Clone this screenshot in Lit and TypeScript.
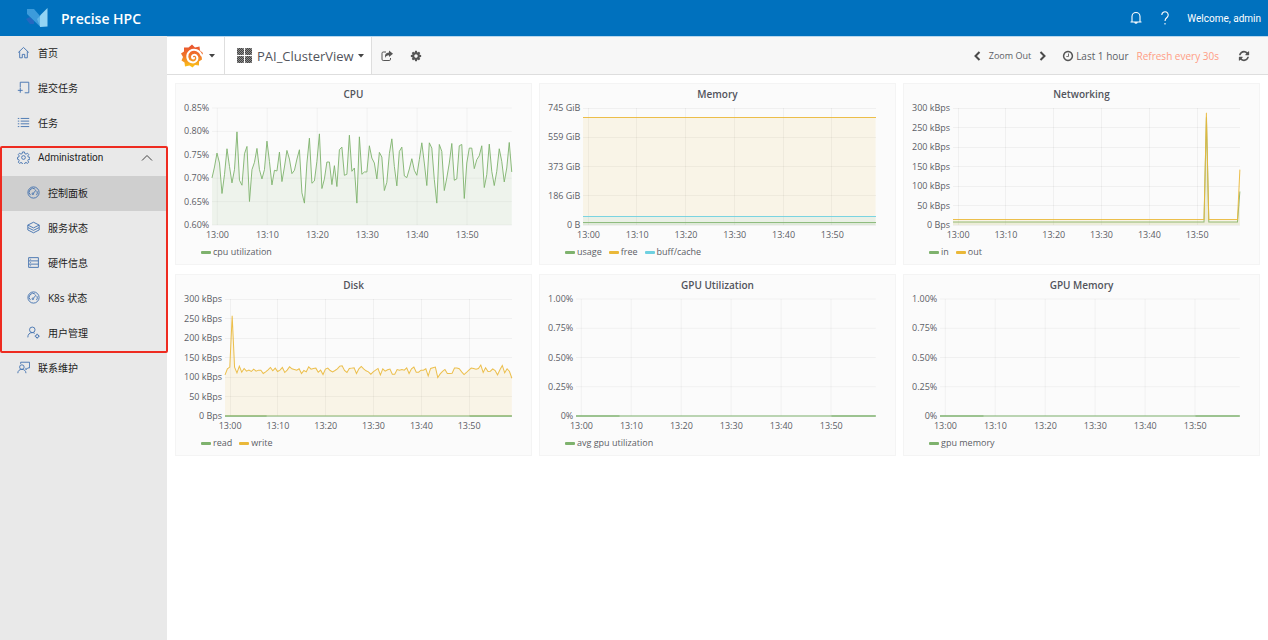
import { LitElement, html, svg, css, nothing } from "lit";
import { customElement, property, state } from "lit/decorators.js";
import { classMap } from "lit/directives/class-map.js";

const GREEN = "#7eb26d";
const YELLOW = "#eab839";
const BLUE = "#6ed0e0";

interface Series {
  name: string;
  color: string;
  min: number;
  max: number;
  /** One sample every 30 seconds; a single entry means a constant series. */
  values: number[];
  faint?: boolean;
}

interface PanelData {
  title: string;
  ticks: string[];
  series: Series[];
}

const CPU = [
  295, 262, 220, 250, 342, 285, 207, 260, 310, 270, 156, 302, 317, 222, 200, 366, 270, 248, 206, 270, 298, 270, 184, 245,
  316, 272, 274, 217, 306, 262, 212, 238, 282, 272, 238, 210, 340, 371, 250, 175, 311, 304, 245, 162, 327, 298, 247, 247,
  315, 258, 321, 210, 202, 287, 284, 166, 275, 265, 371, 171, 284, 277, 277, 198, 235, 250, 298, 218, 232, 333, 308, 222,
  177, 260, 319, 215, 202, 289, 294, 268, 237, 272, 287, 240, 189, 250, 318, 189, 205, 300, 371, 194, 215, 333, 295, 250,
  191, 302, 298, 198, 194, 357, 250, 205, 205, 267, 240, 228, 198, 324, 285, 193, 275, 318, 275, 207, 245, 307, 265, 188,
  277,
];

const DISK = [
  315, 297, 292, 140, 292, 309, 289, 307, 296, 304, 301, 305, 298, 304, 301, 301, 311, 306, 300, 293, 303, 295, 305, 301,
  293, 308, 301, 291, 297, 299, 301, 297, 311, 302, 306, 291, 298, 296, 295, 307, 301, 314, 298, 295, 302, 306, 302, 297,
  289, 288, 302, 308, 296, 295, 294, 311, 297, 290, 297, 303, 306, 313, 306, 301, 296, 315, 297, 304, 300, 298, 313, 313,
  299, 301, 299, 301, 294, 311, 297, 292, 307, 307, 301, 301, 297, 318, 296, 294, 292, 323, 312, 305, 299, 311, 311, 310,
  295, 295, 297, 306, 314, 308, 301, 295, 296, 298, 296, 286, 308, 294, 305, 304, 297, 302, 315, 300, 287, 309, 297, 305,
  325,
];

const traffic = (base: number, peak: number, last: number) =>
  Array.from({ length: 121 }, (_, i) => (i === 106 ? peak : i === 120 ? last : base));

const RATE = ["300 kBps", "250 kBps", "200 kBps", "150 kBps", "100 kBps", "50 kBps", "0 Bps"];
const PERCENT = ["1.00%", "0.75%", "0.50%", "0.25%", "0%"];
const TIMES = ["13:00", "13:10", "13:20", "13:30", "13:40", "13:50"];

const PANELS: PanelData[] = [
  {
    title: "CPU",
    ticks: ["0.85%", "0.80%", "0.75%", "0.70%", "0.65%", "0.60%"],
    series: [{ name: "cpu utilization", color: GREEN, min: 437, max: 84, values: CPU }],
  },
  {
    title: "Memory",
    ticks: ["745 GiB", "559 GiB", "373 GiB", "186 GiB", "0 B"],
    series: [
      { name: "usage", color: GREEN, min: 0, max: 745, values: [13] },
      { name: "free", color: YELLOW, min: 0, max: 745, values: [686] },
      { name: "buff/cache", color: BLUE, min: 0, max: 745, values: [53] },
    ],
  },
  {
    title: "Networking",
    ticks: RATE,
    series: [
      { name: "in", color: GREEN, min: 0, max: 300, values: traffic(8, 276, 86) },
      { name: "out", color: YELLOW, min: 0, max: 300, values: traffic(14, 288, 142) },
    ],
  },
  {
    title: "Disk",
    ticks: RATE,
    series: [
      { name: "read", color: GREEN, min: 0, max: 300, values: [0], faint: true },
      { name: "write", color: YELLOW, min: 437, max: 90, values: DISK },
    ],
  },
  {
    title: "GPU Utilization",
    ticks: PERCENT,
    series: [{ name: "avg gpu utilization", color: GREEN, min: 0, max: 1, values: [0], faint: true }],
  },
  {
    title: "GPU Memory",
    ticks: PERCENT,
    series: [{ name: "gpu memory", color: GREEN, min: 0, max: 1, values: [0], faint: true }],
  },
];

@customElement("graph-panel")
class GraphPanel extends LitElement {
  @property({ attribute: false }) panel!: PanelData;

  static styles = css`
    :host {
      display: block;
      box-sizing: border-box;
      min-width: 0;
      padding: 0 19px 5px 8px;
      border: 1px solid #f4f4f4;
      background: #fbfbfb;
      color: #5c5e66;
      font-size: 9px;
      line-height: 12px;
    }
    .title {
      margin: 0 -11px 4px 0;
      color: #52545c;
      font-size: 10px;
      font-weight: 600;
      line-height: 20px;
      text-align: center;
    }
    .chart {
      display: grid;
      grid-template-columns: auto minmax(0, 1fr);
      column-gap: 3px;
    }
    .ticks {
      display: flex;
      flex-direction: column;
      justify-content: space-between;
      margin: -6px 0;
      text-align: right;
      white-space: nowrap;
    }
    .plot {
      display: block;
      width: 100%;
      height: 117px;
      overflow: visible;
    }
    .plot * {
      vector-effect: non-scaling-stroke;
    }
    .rule {
      stroke: #000;
      stroke-opacity: 0.045;
      shape-rendering: crispEdges;
    }
    .line {
      fill: none;
      stroke-width: 1;
      stroke-opacity: 0.9;
    }
    .flat {
      shape-rendering: crispEdges;
    }
    .base {
      stroke-width: 2;
      stroke-opacity: 0.5;
    }
    .times {
      grid-column: 2;
      display: flex;
      margin: 0 6.6% 0 -6.6%;
      line-height: 20px;
      text-align: center;
    }
    .time {
      flex: 1 1 0;
    }
    .legend {
      display: flex;
      gap: 7px;
      margin: 0;
      padding: 0 0 0 17px;
      list-style: none;
      line-height: 14px;
    }
    .key {
      display: flex;
      align-items: center;
      gap: 2px;
    }
    .swatch {
      width: 10px;
      height: 3px;
      border-radius: 1px;
    }
  `;

  private drawSeries(s: Series) {
    const y = (v: number) => ((s.max - v) / (s.max - s.min)) * 1000;
    const values = s.values.length === 1 ? [s.values[0], s.values[0]] : s.values;
    const step = 1200 / (values.length - 1);
    const points = values.map((v, i) => `${(i * step).toFixed(1)},${y(v).toFixed(1)}`).join(" ");
    if (s.faint) {
      return svg`
        <path class="line base" stroke=${s.color} d="M0 1000H1200"></path>
        <path class="line base" stroke=${s.color} d="M0 1000H174M1023 1000H1200"></path>`;
    }
    return svg`
      <polygon points="0,1000 ${points} 1200,1000" fill=${s.color} fill-opacity="0.1"></polygon>
      <polyline class=${s.values.length === 1 ? "line flat" : "line"} points=${points} stroke=${s.color}></polyline>`;
  }

  render() {
    const { title, ticks, series } = this.panel;
    return html`
      <h2 class="title">${title}</h2>
      <div class="chart">
        <div class="ticks">${ticks.map((t) => html`<span>${t}</span>`)}</div>
        <svg class="plot" viewBox="0 0 1200 1000" preserveAspectRatio="none" role="img" aria-label=${title}>
          ${ticks.map((_, i) => {
            const y = (i / (ticks.length - 1)) * 1000;
            return svg`<line class="rule" x1="0" x2="1200" y1=${y} y2=${y}></line>`;
          })}
          ${TIMES.map((_, i) => svg`<line class="rule" x1=${21 + i * 200} x2=${21 + i * 200} y1="0" y2="1000"></line>`)}
          ${series.map((s) => this.drawSeries(s))}
        </svg>
        <div class="times">${TIMES.map((t) => html`<span class="time">${t}</span>`)}</div>
      </div>
      <ul class="legend">
        ${series.map(
          (s) => html`<li class="key"><span class="swatch" style="background:${s.color}"></span>${s.name}</li>`
        )}
      </ul>
    `;
  }
}

const ICONS: Record<string, unknown> = {
  home: svg`<path d="M1.500 8L8 1.800L14.500 8M3.300 6.500v8h3.200v-4.200h3v4.200h3.200v-8"/>`,
  submit: svg`<path d="M4 8V1.500h10.500v10.500M9.500 14.500h5v-2.500M4 8.500v6M1 11.500h6"/>`,
  list: svg`<path d="M4.500 3H15M4.500 6.300H15M4.500 9.600H15M4.500 13H15M1 3h1.800M1 6.300h1.800M1 9.600h1.800M1 13h1.800"/>`,
  gear: svg`<circle cx="8" cy="8" r="2.300"/><path d="M6.800 1.200h2.400l.4 2 1.500.7 1.800-1.200 1.500 1.600-1.100 1.700.6 1.500 2 .4v2.200l-2 .4-.6 1.500 1.100 1.700-1.500 1.600-1.800-1.200-1.500.7-.4 2H6.800l-.4-2-1.500-.7-1.800 1.200-1.500-1.600 1.100-1.700-.6-1.500-1.500-.4V7.900l1.500-.4.6-1.500-1.100-1.700 1.500-1.600 1.800 1.200 1.500-.7z"/>`,
  gauge: svg`<circle cx="8" cy="8" r="6.900"/><path d="M4.300 11.200A4.600 4.600 0 0 1 10.300 4M12.200 6.200A4.600 4.600 0 0 1 11.700 11.200M7.800 9L11.300 4.900"/><circle cx="7.200" cy="9.600" r="1"/>`,
  layers: svg`<path d="M8 1.500L15 5 8 8.500 1 5zM1 5v3l7 3.500L15 8V5M1 8v3l7 3.500 7-3.500V8"/>`,
  server: svg`<path d="M2 2h12v12H2zM2 6h12M2 10h12M4 4h1M4 8h1M4 12h1"/>`,
  user: svg`<circle cx="6.500" cy="4.700" r="3.400"/><path d="M1 14c0-3.500 2-5.900 5.500-5.900 1.300 0 2.300.4 3 1"/><circle cx="12.500" cy="12.500" r="1.900"/><path d="M12.500 9.500v1M12.500 14.500v1M9.500 12.500h1M14.500 12.500h1"/>`,
  contact: svg`<circle cx="6" cy="7.500" r="2.800"/><path d="M1 15c0-2.900 2-4.700 5-4.700s5 1.800 5 4.700M4.500 3.500v-2h11v7h-2.200l-2.300 2.300V8.500"/>`,
};

const FA_COG =
  "M1152 896q0-106-75-181t-181-75-181 75-75 181 75 181 181 75 181-75 75-181zm512-109v222q0 12-8 23t-20 13l-185 28q-19 54-39 91 35 50 107 138 10 12 10 25t-9 23q-27 37-99 108t-94 71q-12 0-26-9l-138-108q-44 23-91 38-16 136-29 186-7 28-36 28h-222q-14 0-24.500-8.500t-11.500-21.500l-28-184q-49-16-90-37l-141 107q-10 9-25 9-14 0-25-11-126-114-165-168-7-10-7-23 0-12 8-23 15-21 51-66.500t54-70.500q-27-50-41-99l-183-27q-13-2-21-12.500t-8-23.500v-222q0-12 8-23t19-13l186-28q14-46 39-92-40-57-107-138-10-12-10-24 0-10 9-23 26-36 98.500-107.500t94.500-71.500q13 0 26 10l138 107q44-23 91-38 16-136 29-186 7-28 36-28h222q14 0 24.500 8.500t11.500 21.500l28 184q49 16 90 37l142-107q9-9 24-9 13 0 25 10 129 119 165 170 7 8 7 22 0 12-8 23-15 21-51 66.500t-54 70.500q26 50 41 98l183 28q13 2 21 12.500t8 23.500z";
const FA_REFRESH =
  "M1639 1056q0 5-1 7-64 268-268 434.500t-478 166.500q-146 0-282.500-55t-243.500-157l-129 129q-19 19-45 19t-45-19-19-45v-448q0-26 19-45t45-19h448q26 0 45 19t19 45-19 45l-137 137q71 66 161 102t187 36q134 0 250-65t186-179q11-17 53-117 8-23 30-23h192q13 0 22.500 9.500t9.500 22.500zm25-800v448q0 26-19 45t-45 19h-448q-26 0-45-19t-19-45 19-45l138-138q-148-137-349-137-134 0-250 65t-186 179q-11 17-53 117-8 23-30 23h-199q-13 0-22.500-9.500t-9.500-22.500v-7q65-268 270-434.500t480-166.500q146 0 284 55.500t245 156.500l130-129q19-19 45-19t45 19 19 45z";
const FA_CLOCK =
  "M1024 544v448q0 14-9 23t-23 9h-320q-14 0-23-9t-9-23v-64q0-14 9-23t23-9h224v-352q0-14 9-23t23-9h64q14 0 23 9t9 23zm416 352q0-148-73-273t-198-198-273-73-273 73-198 198-73 273 73 273 198 198 273 73 273-73 198-198 73-273zm224 0q0 209-103 385.500t-279.500 279.500-385.500 103-385.500-103-279.500-279.500-103-385.500 103-385.500 279.500-279.500 385.500-103 385.500 103 279.500 279.500 103 385.500z";

const fa = (d: string) => html`<svg class="fa" viewBox="0 0 1792 1792" aria-hidden="true"><path d=${d}></path></svg>`;

const SUB_ITEMS = [
  { icon: "gauge", label: "控制面板" },
  { icon: "layers", label: "服务状态" },
  { icon: "server", label: "硬件信息" },
  { icon: "gauge", label: "K8s 状态" },
  { icon: "user", label: "用户管理" },
];

@customElement("side-nav")
class SideNav extends LitElement {
  @state() private open = true;
  @state() private current = "控制面板";

  static styles = css`
    :host {
      display: block;
      background: #e9e9e9;
      color: #1c1c1c;
      font-size: 10px;
    }
    .item {
      display: flex;
      align-items: center;
      gap: 8px;
      box-sizing: border-box;
      width: 100%;
      height: 35px;
      padding: 0 14px 2px 17px;
      border: 0;
      background: none;
      color: inherit;
      font: inherit;
      text-align: left;
      text-decoration: none;
      cursor: pointer;
    }
    .sub {
      padding-left: 27px;
    }
    .active {
      padding-left: 25px;
      border-left: 2px solid #8c2b45;
      background: #cfcfcf;
    }
    .parent {
      font-family: Roboto, sans-serif;
    }
    .icon {
      flex: none;
      width: 13px;
      height: 13px;
      fill: none;
      stroke: #3f6fae;
      stroke-width: 1.1;
    }
    .label {
      flex: 1;
    }
    .caret {
      width: 12px;
      height: 12px;
      fill: none;
      stroke: #444;
    }
    .group {
      position: relative;
    }
    .marker {
      position: absolute;
      inset: 5px -1px -2px 0;
      border: 2px solid #ee2b20;
      border-radius: 2px;
      pointer-events: none;
    }
  `;

  private icon(name: string) {
    return html`<svg class="icon" viewBox="0 0 16 16" aria-hidden="true">${ICONS[name]}</svg>`;
  }

  private link(icon: string, label: string, sub = false) {
    const active = this.current === label;
    return html`<a
      class=${classMap({ item: true, sub, active })}
      href="#"
      aria-current=${active ? "page" : nothing}
      @click=${(e: Event) => {
        e.preventDefault();
        this.current = label;
      }}
      >${this.icon(icon)}<span class="label">${label}</span></a
    >`;
  }

  render() {
    return html`<nav>
      ${this.link("home", "首页")} ${this.link("submit", "提交任务")} ${this.link("list", "任务")}
      <div class="group">
        <button class="item parent" aria-expanded=${this.open} @click=${() => (this.open = !this.open)}>
          ${this.icon("gear")}<span class="label">Administration</span>
          <svg class="caret" viewBox="0 0 12 12" aria-hidden="true">
            <path d=${this.open ? "M1 8.500L6 3.500L11 8.500" : "M1 3.500L6 8.500L11 3.500"}></path>
          </svg>
        </button>
        ${this.open ? SUB_ITEMS.map((s) => this.link(s.icon, s.label, true)) : nothing}
        <div class="marker"></div>
      </div>
      ${this.link("contact", "联系维护")}
    </nav>`;
  }
}

@customElement("app-root")
class AppRoot extends LitElement {
  static styles = css`
    :host {
      display: grid;
      grid-template: auto 1fr / 167px minmax(0, 1fr);
      min-height: 100vh;
      background: #fff;
      font-family: "Open Sans", "Noto Sans CJK SC", sans-serif;
    }
    button {
      display: flex;
      align-items: center;
      padding: 0;
      border: 0;
      background: none;
      color: inherit;
      font: inherit;
      cursor: pointer;
    }
    .header {
      grid-column: 1 / -1;
      display: flex;
      align-items: center;
      box-sizing: border-box;
      height: 37px;
      padding: 0 7px 0 26px;
      border-bottom: 1px solid #b9d8ee;
      background: #0071be;
      color: #fff;
    }
    .logo {
      width: 22px;
      height: 20px;
    }
    .brand {
      flex: 1;
      margin: 0 0 0 13px;
      font-size: 14px;
      font-weight: 600;
    }
    .tools {
      display: flex;
      align-items: center;
      gap: 15px;
      font-family: Roboto, sans-serif;
      font-size: 10px;
    }
    .line {
      width: 14px;
      height: 14px;
      fill: none;
      stroke: #fff;
      stroke-width: 1.1;
    }
    .nav {
      margin-top: -1px;
      z-index: 1;
    }
    .toolbar {
      display: flex;
      align-items: stretch;
      box-sizing: border-box;
      height: 38px;
      border-bottom: 1px solid #dedede;
      background: #f7f7f7;
      color: #5c5e66;
    }
    .cell {
      box-sizing: border-box;
      border-right: 1px solid #dedede;
      background: #fff;
    }
    .home {
      gap: 5px;
      width: 58px;
      padding-left: 14px;
    }
    .board {
      gap: 4px;
      padding: 0 7px 0 12px;
      color: #52545c;
      font-size: 13px;
    }
    .flame {
      width: 23px;
      height: 24px;
    }
    .dots {
      width: 15px;
      height: 15px;
      margin-right: 1px;
    }
    .caret {
      width: 6px;
      height: 4px;
      fill: #444;
    }
    .fa {
      width: 12px;
      height: 12px;
      fill: #555;
    }
    .actions {
      display: flex;
      flex: 1;
      gap: 17px;
      padding-left: 9px;
    }
    .range {
      display: flex;
      align-items: center;
      gap: 8px;
      padding-right: 18px;
      font-size: 10px;
    }
    .zoom {
      font-size: 9px;
    }
    .chev {
      width: 8px;
      height: 10px;
      fill: none;
      stroke: #4a4a4a;
      stroke-width: 2;
    }
    .clock {
      gap: 2px;
      margin-left: 7px;
    }
    .every {
      margin-right: 11px;
      color: #ff9d85;
    }
    .panels {
      display: grid;
      grid-template-columns: repeat(3, minmax(0, 1fr));
      gap: 9px 7px;
      padding: 8px;
    }
  `;

  render() {
    const squares = [0, 8].flatMap((y) => [0, 8].map((x) => [x, y]));
    return html`
      <header class="header">
        <svg class="logo" viewBox="0 0 22 20" aria-hidden="true">
          <path fill="#2467c0" d="M0 11l4-2 4 4v3H4z"></path>
          <path fill="#3c9bdb" d="M1 1h7l6 7v10.500L1 6z"></path>
          <path fill="#5fb4e6" d="M14 8l-3 3 3 7.500z"></path>
          <path fill="#93d4f4" d="M14 7.500L21.500 0v18.500l-7.500.5z"></path>
        </svg>
        <h1 class="brand">Precise HPC</h1>
        <div class="tools">
          <button aria-label="Notifications">
            <svg class="line" viewBox="0 0 14 14"><path d="M1.500 11h11M3 11V5.500a4 4 0 0 1 8 0V11M5.800 11.500a1.300 1.300 0 0 0 2.400 0"></path></svg>
          </button>
          <button aria-label="Help">
            <svg class="line" viewBox="0 0 14 14"><path d="M3.800 4a3.200 3.200 0 1 1 5.200 2.500C7.700 7.500 7 8 7 10M7 12v1.500"></path></svg>
          </button>
          <span>Welcome, admin</span>
        </div>
      </header>
      <side-nav class="nav"></side-nav>
      <main>
        <div class="toolbar">
          <button class="cell home" aria-label="Grafana menu">
            <svg class="flame" viewBox="0 0 46 48">
              <defs>
                <linearGradient id="g" x1="0" y1="0" x2="0" y2="1">
                  <stop offset="0" stop-color="#e8512f"></stop>
                  <stop offset="0.500" stop-color="#f0762a"></stop>
                  <stop offset="1" stop-color="#fcc917"></stop>
                </linearGradient>
              </defs>
              <path
                fill="url(#g)"
                d="M22 1l6 6 9-2 1 8 6 5-3 6 1 7-6 4 0 8-8-1-5 5-6-4-9 2-1-8-6-4 3-7-4-7 6-4 0-8 9 0z"
              ></path>
              <path
                fill="none"
                stroke="#fff"
                stroke-width="4"
                stroke-linecap="round"
                d="M41 23C38 12 26 9 18 14C10 20 11 33 20 36C28 39 35 32 32 25C29 20 22 21 22 26C22 29 25 30 26 28"
              ></path>
            </svg>
            <svg class="caret" viewBox="0 0 6 4"><path d="M0 0h6L3 3.500z"></path></svg>
          </button>
          <button class="cell board">
            <svg class="dots" viewBox="0 0 15 15" aria-hidden="true">
              <defs>
                <pattern id="check" width="2" height="2" patternUnits="userSpaceOnUse">
                  <rect width="2" height="2" fill="#8d8d8d"></rect>
                  <path fill="#444" d="M0 0h1v1H0zM1 1h1v1H1z"></path>
                </pattern>
              </defs>
              ${squares.map(([x, y]) => svg`<rect x=${x} y=${y} width="7" height="7" rx="1" fill="url(#check)"></rect>`)}
            </svg>
            PAI_ClusterView
            <svg class="caret" viewBox="0 0 6 4"><path d="M0 0h6L3 3.500z"></path></svg>
          </button>
          <div class="actions">
            <button aria-label="Share">
              <svg class="fa" viewBox="0 0 12 12">
                <path fill="none" stroke="#555" d="M5 2H2.200Q1 2 1 3.200v6Q1 10.500 2.200 10.500h6Q9.500 10.500 9.500 9.200V8"></path>
                <path d="M8 0.500L12 3.800L8 7V5.200Q5 5.200 4.200 8Q3 2.500 8 2.400z"></path>
              </svg>
            </button>
            <button aria-label="Settings">${fa(FA_COG)}</button>
          </div>
          <div class="range">
            <button aria-label="Earlier"><svg class="chev" viewBox="0 0 8 10"><path d="M6.500 1L2.500 5L6.500 9"></path></svg></button>
            <button class="zoom">Zoom Out</button>
            <button aria-label="Later"><svg class="chev" viewBox="0 0 8 10"><path d="M1.500 1L5.500 5L1.500 9"></path></svg></button>
            <button class="clock">${fa(FA_CLOCK)}Last 1 hour</button>
            <button class="every">Refresh every 30s</button>
            <button aria-label="Refresh">${fa(FA_REFRESH)}</button>
          </div>
        </div>
        <div class="panels">${PANELS.map((p) => html`<graph-panel .panel=${p}></graph-panel>`)}</div>
      </main>
    `;
  }
}
